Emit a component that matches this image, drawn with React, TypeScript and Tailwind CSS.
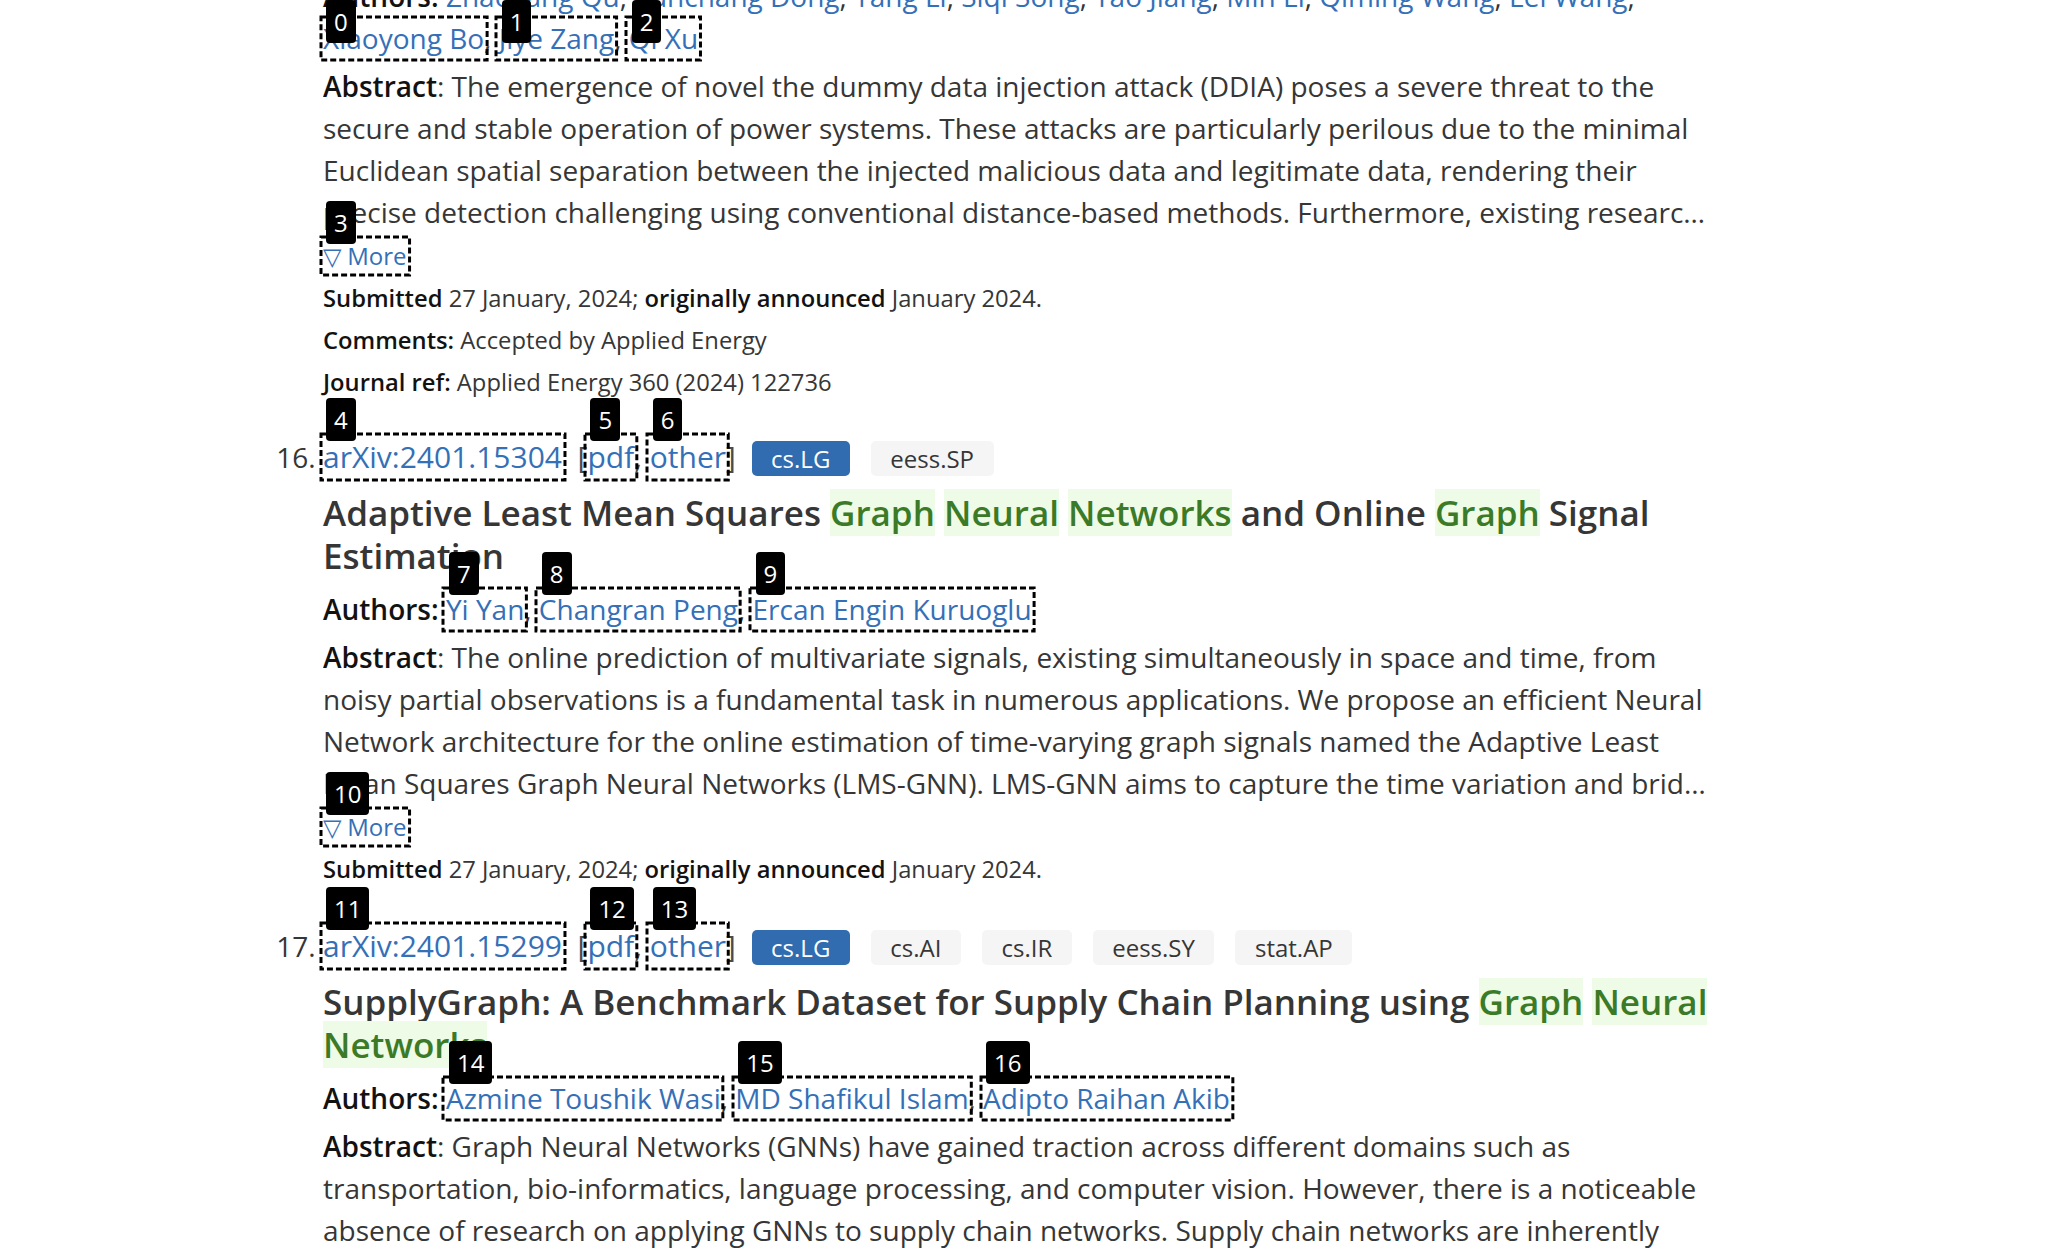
import type { ReactNode } from 'react'

type Part = string | { hit: string }

interface Entry {
  num: number
  id: string
  tags: string[]
  title: Part[]
  authors: string[]
  abstract: string
  submitted: string
  announced: string
  comments?: string
  journal?: string
  marks: number[] // label numbers: id, pdf, other, authors..., more
}

const LINK = 'text-[#3470b7]'
const BOLD = 'font-semibold text-[#121212]'
const SMALL = 'text-[23.75px] leading-[42px]'

// dashed box + black number badge over a target
const Mark = ({ n, pin, children }: { n: number; pin?: boolean; children: ReactNode }) => (
  <span className="relative">
    {children}
    <svg className="pointer-events-none absolute left-[-2.5px] top-[-2.5px] w-[calc(100%+5px)] h-[calc(100%+5px)] overflow-visible">
      <rect x="0" y="0" width="100%" height="100%" fill="none" stroke="#000" strokeWidth="3" strokeDasharray="6 3" />
    </svg>
    <span
      className={`absolute left-[3px] ${pin ? 'top-[-19px]' : 'top-[-38px]'} h-[43px] px-[8px] rounded-[4px] bg-black text-white text-[24px] leading-[43px] font-normal whitespace-nowrap`}
    >
      {n}
    </span>
  </span>
)

const Tag = ({ label, primary }: { label: string; primary?: boolean }) => (
  <span
    className={`inline-block h-[35px] px-[19.5px] rounded-[5px] text-[24px] leading-[35px] ${
      primary ? 'bg-[#306caf] text-white' : 'bg-[#f5f5f5] text-[#363636]'
    }`}
  >
    {label}
  </span>
)

const Title = ({ parts }: { parts: Part[] }) => (
  <p className="mt-[10px] text-[35px] leading-[43px] font-semibold text-[#363636]">
    {parts.map((p, i) =>
      typeof p === 'string' ? (
        <span key={i}>{p}</span>
      ) : (
        <span key={i} className="bg-[#eefbe6] text-[#3b7a26]">{p.hit}</span>
      )
    )}
  </p>
)

const Authors = ({ names, marks, pin }: { names: string[]; marks: Record<number, number>; pin?: boolean }) => (
  <p className="text-[28px] leading-[42px]">
    <span className={BOLD}>Authors:</span>{' '}
    {names.map((name, i) => {
      const link = <a className={LINK}>{name}</a>
      return (
        <span key={name}>
          {marks[i] !== undefined ? (
            <Mark n={marks[i]} pin={pin}>{link}</Mark>
          ) : (
            link
          )}
          {i < names.length - 1 ? ', ' : ''}
        </span>
      )
    })}
  </p>
)

// the short abstract comes already cut, ending in an ellipsis
const Abstract = ({ text, more }: { text: string; more: number }) => (
  <>
    <p className="mt-[6px] text-[28px] leading-[42px] line-clamp-4">
      <span className={BOLD}>Abstract</span>: {text}&hellip;
    </p>
    <p className="mt-[2px] text-[24px] leading-[42px]">
      <Mark n={more}>
        <a className={LINK}>▽ More</a>
      </Mark>
    </p>
  </>
)

const Meta = ({ e }: { e: Pick<Entry, 'submitted' | 'announced' | 'comments' | 'journal'> }) => (
  <>
    <p className={SMALL}>
      <span className={BOLD}>Submitted</span> {e.submitted}; <span className={BOLD}>originally announced</span>{' '}
      {e.announced}.
    </p>
    {e.comments && (
      <p className={SMALL}>
        <span className={BOLD}>Comments:</span> {e.comments}
      </p>
    )}
    {e.journal && (
      <p className={SMALL}>
        <span className={BOLD}>Journal ref:</span> {e.journal}
      </p>
    )}
  </>
)

const ENTRIES: Entry[] = [
  {
    num: 16,
    id: '2401.15304',
    tags: ['cs.LG', 'eess.SP'],
    title: [
      'Adaptive Least Mean Squares ',
      { hit: 'Graph' },
      ' ',
      { hit: 'Neural' },
      ' ',
      { hit: 'Networks' },
      ' and Online ',
      { hit: 'Graph' },
      ' Signal Estimation',
    ],
    authors: ['Yi Yan', 'Changran Peng', 'Ercan Engin Kuruoglu'],
    abstract:
      'The online prediction of multivariate signals, existing simultaneously in space and time, from noisy partial observations is a fundamental task in numerous applications. We propose an efficient Neural Network architecture for the online estimation of time-varying graph signals named the Adaptive Least Mean Squares Graph Neural Networks (LMS-GNN). LMS-GNN aims to capture the time variation and brid',
    submitted: '27 January, 2024',
    announced: 'January 2024',
    marks: [4, 5, 6, 7, 8, 9, 10],
  },
  {
    num: 17,
    id: '2401.15299',
    tags: ['cs.LG', 'cs.AI', 'cs.IR', 'eess.SY', 'stat.AP'],
    title: [
      'SupplyGraph: A Benchmark Dataset for Supply Chain Planning using ',
      { hit: 'Graph' },
      ' ',
      { hit: 'Neural' },
      ' ',
      { hit: 'Networks' },
    ],
    authors: ['Azmine Toushik Wasi', 'MD Shafikul Islam', 'Adipto Raihan Akib'],
    abstract:
      'Graph Neural Networks (GNNs) have gained traction across different domains such as transportation, bio-informatics, language processing, and computer vision. However, there is a noticeable absence of research on applying GNNs to supply chain networks. Supply chain networks are inherently graph-like in structure, making them prime candida',
    submitted: '27 January, 2024',
    announced: 'January 2024',
    marks: [11, 12, 13, 14, 15, 16, 17],
  },
]

const Result = ({ e, first }: { e: Entry; first?: boolean }) => {
  const [mId, mPdf, mOther, a0, a1, a2, mMore] = e.marks
  return (
    <li value={e.num} className={`${first ? 'mt-[29px]' : 'mt-[31px]'} marker:text-[28px] marker:text-[#363636]`}>
      <div className="text-[30px] leading-[49px]">
        <Mark n={mId}>
          <a className={LINK}>arXiv:{e.id}</a>
        </Mark>
        <span className="text-[#4a4a4a]">
          &nbsp;&nbsp;[
          <Mark n={mPdf}>
            <a className={LINK}>pdf</a>
          </Mark>
          ,{' '}
          <Mark n={mOther}>
            <a className={LINK}>other</a>
          </Mark>
          ]&nbsp;
        </span>
        <span className="inline-flex gap-[21px] ml-[8px]">
          {e.tags.map((t, i) => (
            <Tag key={t} label={t} primary={i === 0} />
          ))}
        </span>
      </div>
      <Title parts={e.title} />
      <div className="mt-[11px]">
        <Authors names={e.authors} marks={{ 0: a0, 1: a1, 2: a2 }} />
      </div>
      <Abstract text={e.abstract} more={mMore} />
      <Meta e={e} />
    </li>
  )
}

export default function App() {
  return (
    <div className="h-screen overflow-hidden bg-white text-[#363636] font-['Open_Sans',sans-serif]">
      <div className="ml-[323px] w-[1400px]">
        {/* tail of result 15, scrolled past its header */}
        <div className="mt-[-25px]">
          <Authors
            names={[
              'Zhaoyang Qu',
              'Yunchang Dong',
              'Yang Li',
              'Siqi Song',
              'Tao Jiang',
              'Min Li',
              'Qiming Wang',
              'Lei Wang',
              'Xiaoyong Bo',
              'Jiye Zang',
              'Qi Xu',
            ]}
            marks={{ 8: 0, 9: 1, 10: 2 }}
            pin
          />
          <Abstract
            text="The emergence of novel the dummy data injection attack (DDIA) poses a severe threat to the secure and stable operation of power systems. These attacks are particularly perilous due to the minimal Euclidean spatial separation between the injected malicious data and legitimate data, rendering their precise detection challenging using conventional distance-based methods. Furthermore, existing researc"
            more={3}
          />
          <Meta
            e={{
              submitted: '27 January, 2024',
              announced: 'January 2024',
              comments: 'Accepted by Applied Energy',
              journal: 'Applied Energy 360 (2024) 122736',
            }}
          />
        </div>
        <ol className="list-decimal">
          {ENTRIES.map((e, i) => (
            <Result key={e.id} e={e} first={i === 0} />
          ))}
        </ol>
      </div>
    </div>
  )
}
